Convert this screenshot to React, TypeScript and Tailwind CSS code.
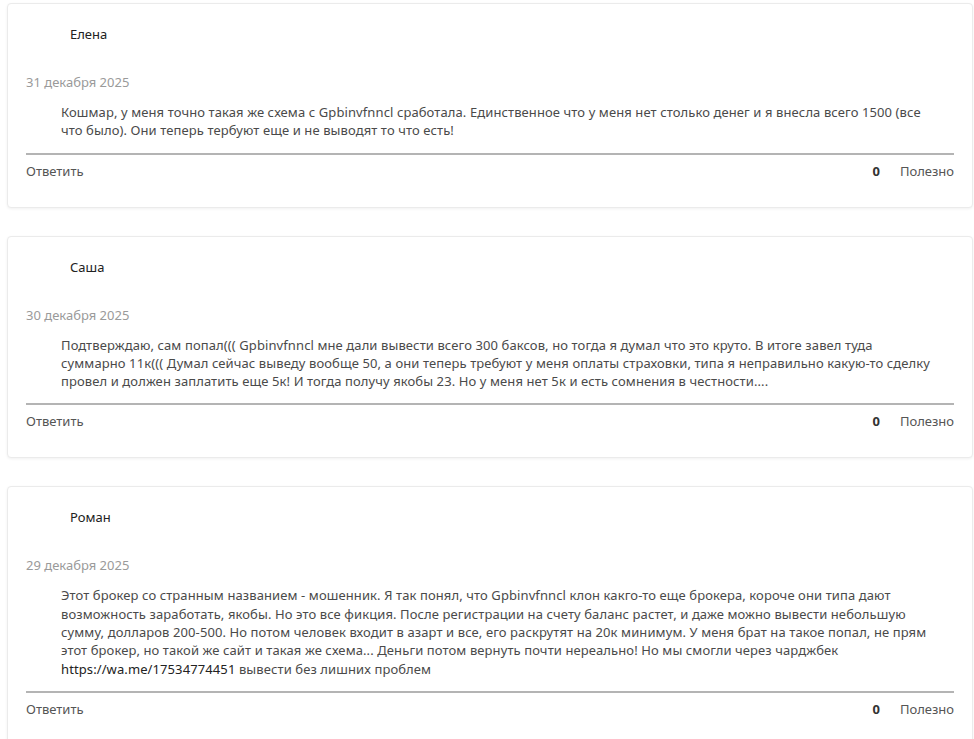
import React from "react";

type Review = {
  name: string;
  date: string;
  text: React.ReactNode;
};

const reviews: Review[] = [
  {
    name: "Елена",
    date: "31 декабря 2025",
    text: "Кошмар, у меня точно такая же схема с Gpbinvfnncl сработала. Единственное что у меня нет столько денег и я внесла всего 1500 (все что было). Они теперь тербуют еще и не выводят то что есть!",
  },
  {
    name: "Саша",
    date: "30 декабря 2025",
    text: "Подтверждаю, сам попал((( Gpbinvfnncl мне дали вывести всего 300 баксов, но тогда я думал что это круто. В итоге завел туда суммарно 11к((( Думал сейчас выведу вообще 50, а они теперь требуют у меня оплаты страховки, типа я неправильно какую-то сделку провел и должен заплатить еще 5к! И тогда получу якобы 23. Но у меня нет 5к и есть сомнения в честности....",
  },
  {
    name: "Роман",
    date: "29 декабря 2025",
    text: (
      <>
        Этот брокер со странным названием - мошенник. Я так понял, что Gpbinvfnncl клон какго-то еще брокера, короче они типа дают возможность заработать, якобы. Но это все фикция. После регистрации на счету баланс растет, и даже можно вывести небольшую сумму, долларов 200-500. Но потом человек входит в азарт и все, его раскрутят на 20к минимум. У меня брат на такое попал, не прям этот брокер, но такой же сайт и такая же схема... Деньги потом вернуть почти нереально! Но мы смогли через чарджбек{" "}
        <a href="#" className="text-[#222]">https://wa.me/17534774451</a> вывести без лишних проблем
      </>
    ),
  },
];

const ReviewCard = ({ review }: { review: Review }) => (
  <div className="bg-white border border-[#ebebeb] rounded-[4px] shadow-[0_1px_3px_rgba(0,0,0,0.06)] px-[18px] pt-[21px] pb-[27px]">
    <div className="pl-[44px] text-[13px] leading-[18px] text-[#222]">{review.name}</div>
    <div className="mt-[30px] text-[13px] leading-[18px] text-[#9a9a9a]">{review.date}</div>
    <p className="mt-[12px] pl-[35px] pr-[15px] text-[13px] tracking-[0.1px] leading-[18.3px] text-[#4a4a4a]">{review.text}</p>
    <div className="mt-[13px] h-[2px] bg-[#b4b4b4]" />
    <div className="mt-[7px] flex items-center justify-between text-[13px] leading-[18px] text-[#555]">
      <span>Ответить</span>
      <div className="flex items-center gap-[20px]">
        <span className="font-bold text-[#333]">0</span>
        <span>Полезно</span>
      </div>
    </div>
  </div>
);

export default function App() {
  return (
    <div className="min-h-screen bg-white px-[7px] pt-[3px] font-['Noto_Sans',sans-serif]">
      <div className="w-[966px] flex flex-col gap-[28px]">
        {reviews.map((r) => (
          <ReviewCard key={r.date} review={r} />
        ))}
      </div>
    </div>
  );
}
